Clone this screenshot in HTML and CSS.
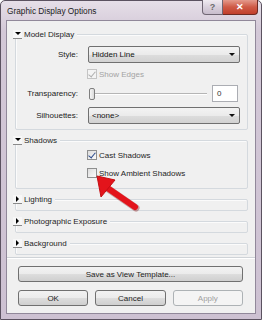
FILE: index.html
```html
<!DOCTYPE html>
<html>
<head>
	<meta charset="utf-8">
	<title>Graphic Display Options</title>
	<link rel="stylesheet" href="styles.css">
</head>
<body>
	<div class="window">
		<div class="titlebar">
			<span class="title">Graphic Display Options</span>
			<div class="caption">
				<span class="cap help">?</span>
				<span class="cap close">&#x2715;</span>
			</div>
		</div>
		<div class="client">
			<div class="panel">
				<!-- model display -->
				<div class="group">
					<div class="group-head"><span class="toggle down"></span>Model Display</div>
					<div class="form">
						<label>Style:</label>
						<div class="combo">Hidden Line<span class="drop"></span></div>

						<span></span>
						<div class="check disabled"><span class="box on"></span>Show Edges</div>

						<label>Transparency:</label>
						<div class="slide-row">
							<div class="slider"><span class="thumb"></span><span class="track"></span></div>
							<div class="num">0</div>
						</div>

						<label>Silhouettes:</label>
						<div class="combo">&lt;none&gt;<span class="drop"></span></div>
					</div>
				</div>
				<!-- shadows -->
				<div class="group">
					<div class="group-head"><span class="toggle down"></span>Shadows</div>
					<div class="checks">
						<div class="check"><span class="box on"></span>Cast Shadows</div>
						<div class="check"><span class="box"></span>Show Ambient Shadows</div>
					</div>
				</div>
				<div class="group shut">
					<div class="group-head"><span class="toggle right"></span>Lighting</div>
				</div>
				<div class="group shut">
					<div class="group-head"><span class="toggle right"></span>Photographic Exposure</div>
				</div>
				<div class="group shut">
					<div class="group-head"><span class="toggle right"></span>Background</div>
				</div>
			</div>
			<button class="btn wide">Save as View Template...</button>
			<div class="btn-row">
				<button class="btn">OK</button>
				<button class="btn">Cancel</button>
				<button class="btn" disabled>Apply</button>
			</div>
		</div>
	</div>
	<svg class="pointer" width="262" height="320" viewBox="0 0 262 320">
		<line x1="106" y1="187" x2="135" y2="207" stroke="#7a0a0a" stroke-width="7" stroke-linecap="round" opacity="0.35" transform="translate(1,1)"/>
		<line x1="106" y1="187" x2="135" y2="207" stroke="#e3141b" stroke-width="6" stroke-linecap="round"/>
		<polygon points="97,176 115,180 101,197" fill="#e3141b" stroke="#c40d12" stroke-width="1" stroke-linejoin="round"/>
	</svg>
</body>
</html>
```

FILE: styles.css
```css
*{box-sizing:border-box}
body{
	margin:0;
	font-family:"Liberation Sans", Arial, sans-serif;
	font-size:8px;
	color:#1e1e1e;
	background:#fff;
}
.window{
	width:262px;
	height:320px;
	display:flex;
	flex-direction:column;
	padding:0 5px 5px 5px;
	border:1px solid #5b5260;
	border-radius:5px 5px 0 0;
	background:linear-gradient(#e6dfe8, #d3c8d7 30px, #cdc1d2);
}
/* title bar */
.titlebar{
	height:19px;
	display:flex;
	align-items:center;
	padding-left:1px;
}
.title{
	font-size:8.3px;
	color:#1c1c1c;
}
.caption{
	margin-left:auto;
	margin-right:-2px;
	align-self:flex-start;
	margin-top:-1px;
	display:flex;
}
.cap{
	height:15px;
	display:flex;
	align-items:center;
	justify-content:center;
	font-weight:bold;
}
.help{
	width:21px;
	border:1px solid #6f6673;
	border-top:0;
	border-radius:0 0 0 4px;
	background:linear-gradient(#f0ebf1, #d9d0dc 50%, #c8bdcc);
	color:#6c6c6c;
	font-size:9px;
}
.close{
	width:35px;
	border:1px solid #6e2a22;
	border-top:0;
	border-left:0;
	border-radius:0 0 4px 0;
	background:linear-gradient(#e49a8c, #cf5a46 50%, #c13f2c);
	color:#fff;
	font-size:9px;
}
/* client area */
.client{
	flex:1;
	display:flex;
	flex-direction:column;
	background:#f0f0f0;
	border:1px solid #91889a;
}
.panel{
	padding:13px 7px 2px 8px;
	border-bottom:1px solid #cfd3d7;
	box-shadow:0 1px 0 #fff;
}
.group{
	border:1px solid #d4d9de;
	border-radius:2px;
	margin-bottom:10px;
	box-shadow:inset 1px 1px 0 #fbfbfb;
}
.group:last-child{margin-bottom:0}
.group.shut{padding-bottom:6px}
.group-head{
	display:flex;
	align-items:center;
	gap:2px;
	height:10px;
	width:max-content;
	margin:-6px 0 0 -3px;
	padding-right:3px;
	background:#f0f0f0;
	color:#1e1e1e;
}
.toggle{
	width:9px;
	height:9px;
	background:#f7f7f7;
	border-bottom:1px solid #8a8a8a;
	display:flex;
	align-items:center;
	justify-content:center;
}
.toggle.down::before{
	content:"";
	border-left:3px solid transparent;
	border-right:3px solid transparent;
	border-top:3px solid #000;
}
.toggle.right::before{
	content:"";
	border-top:3px solid transparent;
	border-bottom:3px solid transparent;
	border-left:3px solid #000;
}
/* model display form */
.form{
	display:grid;
	grid-template-columns:62px 152px;
	grid-template-rows:17px 12px 17px 17px;
	column-gap:10px;
	row-gap:5px;
	padding:7px 0 5px 0;
}
.form label{
	text-align:right;
	align-self:center;
	color:#222;
}
.combo{
	display:flex;
	align-items:center;
	padding-left:3px;
	border:1px solid #707070;
	border-radius:2px;
	background:linear-gradient(#f3f3f3, #ebebeb 50%, #dddddd 51%, #d2d2d2);
	color:#111;
}
.drop{
	margin-left:auto;
	margin-right:4px;
	border-left:3px solid transparent;
	border-right:3px solid transparent;
	border-top:3px solid #111;
}
.check{
	display:flex;
	align-items:center;
	gap:2px;
	height:12px;
	margin-left:-1px;
}
.box{
	width:10px;
	height:10px;
	border:1px solid #8e8f8f;
	background:linear-gradient(135deg, #dcdcdc, #fbfbfb);
	display:flex;
	align-items:center;
	justify-content:center;
}
.box.on::before{
	content:"";
	width:3px;
	height:6px;
	margin-top:-2px;
	border-right:1.5px solid #2b4b8c;
	border-bottom:1.5px solid #2b4b8c;
	transform:rotate(40deg);
}
.check.disabled{color:#a3a3a3}
.check.disabled .box{border-color:#c4c4c4;background:#f4f4f4}
.check.disabled .box.on::before{border-color:#b0b0b0}
.slide-row{
	display:flex;
	align-items:center;
	gap:5px;
	padding-right:2px;
}
.slider{
	flex:1;
	display:flex;
	align-items:center;
	padding-left:1px;
}
.thumb{
	width:6px;
	height:12px;
	border:1px solid #7f7f7f;
	border-radius:2px;
	background:linear-gradient(90deg, #f6f6f6, #dadada);
}
.track{
	flex:1;
	height:2px;
	border-top:1px solid #b5b5b5;
	border-bottom:1px solid #fff;
}
.num{
	width:26px;
	height:17px;
	border:1px solid #abadb3;
	background:#fff;
	padding-left:4px;
	display:flex;
	align-items:center;
	color:#333;
}
/* shadows */
.checks{
	display:flex;
	flex-direction:column;
	gap:6px;
	padding:4px 0 9px 72px;
}
/* buttons */
.btn{
	font:inherit;
	height:16px;
	padding:0;
	border:1px solid #707070;
	border-radius:3px;
	background:linear-gradient(#f2f2f2, #ebebeb 50%, #dddddd 51%, #cfcfcf);
	color:#1e1e1e;
}
.btn:disabled{
	border-color:#adb2b5;
	background:#f4f4f4;
	color:#a0a0a0;
}
.wide{margin:8px 12px 0 11px}
.btn-row{
	display:grid;
	grid-template-columns:repeat(3, 1fr);
	gap:7px;
	margin:8px 12px 0 11px;
}
.pointer{
	position:absolute;
	left:0;
	top:0;
	pointer-events:none;
}
```
